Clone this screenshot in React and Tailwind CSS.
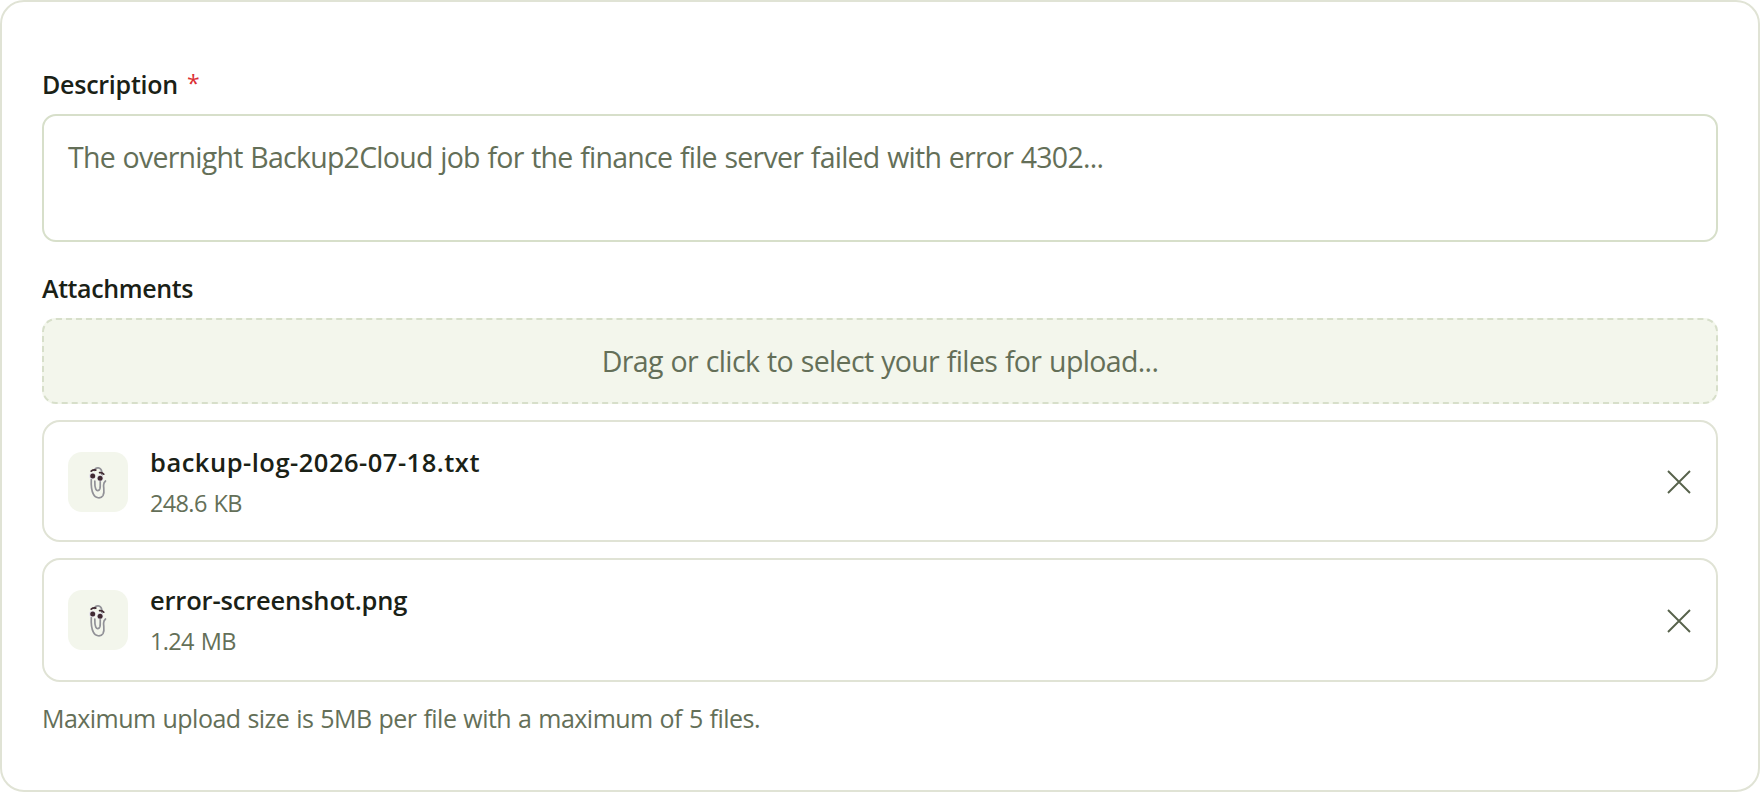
import { useState } from 'react';

const initialFiles = [
  { id: 1, name: 'backup-log-2026-07-18.txt', size: '248.6 KB', row: 'h-[122px] pt-px', nameSpacing: 'tracking-[0.5px]' },
  { id: 2, name: 'error-screenshot.png', size: '1.24 MB', row: 'h-[124px]', nameSpacing: 'tracking-[-0.17px]' },
];

function PaperclipIcon() {
  return (
    <svg className="w-[60px] h-[60px]" viewBox="0 0 60 60" fill="none">
      <path
        d="M26.5 18.5C27.6 14.9 33 14.8 33.8 20V24"
        stroke="#919197"
        strokeWidth="1.7"
        strokeLinecap="round"
      />
      <path
        d="M23.3 27.5C23 33 23.3 38 25.3 42C27.3 46.4 32.8 47 35 43.6C37 40 35.4 36 35.6 33C35.7 31 36.2 30 37.5 29M26.8 29C26.7 32 26.9 35 27.8 37.2C28.8 39.3 31.2 39 31.9 36.8C32.5 34.5 32.2 31 32.2 28.5"
        stroke="#919197"
        strokeWidth="1.7"
        strokeLinecap="round"
      />
      <circle cx="24.4" cy="24" r="3.3" fill="#e4e2ea" />
      <circle cx="32.1" cy="26" r="3.3" fill="#e4e2ea" />
      <circle cx="24.7" cy="24.1" r="2.5" fill="#402a32" />
      <circle cx="32.1" cy="26.2" r="2.5" fill="#402a32" />
      <path d="M23.2 19.2C24.6 18 26 17.7 27.8 18.1M31.6 20.6C33.4 20.4 34.8 20.9 35.8 22.2" stroke="#402a32" strokeWidth="1.7" strokeLinecap="round" />
    </svg>
  );
}

function FileRow({ file, onRemove }) {
  return (
    <div className={`flex items-center pl-6 pr-[25px] bg-white rounded-[18px] border-2 border-[#e0e3d5] ${file.row}`}>
      <div className="w-[60px] h-[60px] flex-shrink-0 rounded-[14px] bg-[#f3f6ec]">
        <PaperclipIcon />
      </div>
      <div className="flex-1 min-w-0 ml-[22px] pt-px">
        <div className={`text-[25.5px] leading-[41px] font-semibold text-[#1a2116] whitespace-nowrap ${file.nameSpacing}`}>
          <span>{file.name}</span>
        </div>
        <div className="text-[23.5px] leading-[40px] tracking-[-0.65px] [word-spacing:1.5px] text-[#646f58] whitespace-nowrap">{file.size}</div>
      </div>
      <button onClick={() => onRemove(file.id)} aria-label="Remove file" className="pt-px text-[#57624b] cursor-pointer">
        <svg className="w-6 h-6" viewBox="0 0 24 24" fill="none" stroke="currentColor" strokeWidth="1.9">
          <path d="M1 1l22 22M23 1L1 23" />
        </svg>
      </button>
    </div>
  );
}

function App() {
  const [files, setFiles] = useState(initialFiles);
  const removeFile = (id) => setFiles(files.filter((file) => file.id !== id));

  return (
    <div className="h-screen bg-white rounded-3xl border-2 border-[#e0e3d5] px-10 pt-[61px] font-['Open_Sans','Noto_Sans',sans-serif]">
      <div className="h-[51px] flex text-[25px] leading-[42px] font-semibold text-[#1a2116] whitespace-nowrap">
        <span className="tracking-[-0.25px]">Description</span>
        <span className="ml-[9px] text-[23px] leading-[40px] font-normal text-[#dc2f35]">*</span>
      </div>
      <div className="h-[128px] pl-6 pt-[19px] rounded-[14px] border-2 border-[#d7dfca] text-[28.5px] leading-[44px] tracking-[-0.75px] [word-spacing:1px] text-[#646f58] whitespace-nowrap">
        <span>The overnight Backup2Cloud job for the finance file server failed with error 4302...</span>
      </div>

      <div className="h-[76px] pt-[25px] text-[25px] leading-[42px] font-semibold text-[#1a2116] whitespace-nowrap">
        <span className="tracking-[-0.4px]">Attachments</span>
      </div>
      <div className="h-[86px] flex items-center justify-center rounded-[14px] border-2 border-dashed border-[#d7dfca] bg-[#f3f6ec] text-[28.5px] tracking-[-0.65px] [word-spacing:1px] text-[#646f58] whitespace-nowrap cursor-pointer">
        <span>Drag or click to select your files for upload...</span>
      </div>

      <div className="mt-4 flex flex-col gap-4">
        {files.map((file) => (
          <FileRow key={file.id} file={file} onRemove={removeFile} />
        ))}
      </div>

      <p className="mt-[15px] text-[25px] leading-[42px] tracking-[-0.54px] [word-spacing:1px] text-[#646f58] whitespace-nowrap">
        Maximum upload size is 5MB per file with a maximum of 5 files.
      </p>
    </div>
  );
}

export default App;
